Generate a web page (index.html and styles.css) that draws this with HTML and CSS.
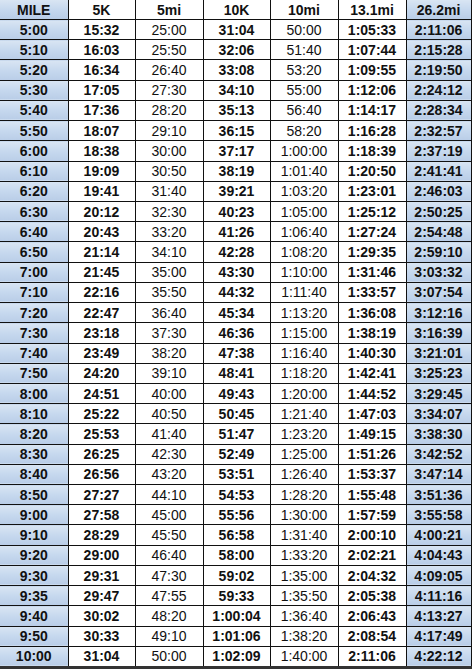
FILE: index.html
```html
<!DOCTYPE html>
<html>
<head>
<meta charset="utf-8">
<link rel="stylesheet" href="styles.css">
</head>
<body>
<table class="pace">
<colgroup>
<col class="c1"><col class="c2"><col class="c3"><col class="c4"><col class="c5"><col class="c6"><col class="c7">
</colgroup>
<thead>
<tr><th class="blue">MILE</th><th>5K</th><th>5mi</th><th>10K</th><th>10mi</th><th>13.1mi</th><th class="blue">26.2mi</th></tr>
</thead>
<tbody>
<tr><td class="blue">5:00</td><td>15:32</td><td class="reg">25:00</td><td>31:04</td><td class="reg">50:00</td><td>1:05:33</td><td class="blue">2:11:06</td></tr>
<tr><td class="blue">5:10</td><td>16:03</td><td class="reg">25:50</td><td>32:06</td><td class="reg">51:40</td><td>1:07:44</td><td class="blue">2:15:28</td></tr>
<tr><td class="blue">5:20</td><td>16:34</td><td class="reg">26:40</td><td>33:08</td><td class="reg">53:20</td><td>1:09:55</td><td class="blue">2:19:50</td></tr>
<tr><td class="blue">5:30</td><td>17:05</td><td class="reg">27:30</td><td>34:10</td><td class="reg">55:00</td><td>1:12:06</td><td class="blue">2:24:12</td></tr>
<tr><td class="blue">5:40</td><td>17:36</td><td class="reg">28:20</td><td>35:13</td><td class="reg">56:40</td><td>1:14:17</td><td class="blue">2:28:34</td></tr>
<tr><td class="blue">5:50</td><td>18:07</td><td class="reg">29:10</td><td>36:15</td><td class="reg">58:20</td><td>1:16:28</td><td class="blue">2:32:57</td></tr>
<tr><td class="blue">6:00</td><td>18:38</td><td class="reg">30:00</td><td>37:17</td><td class="reg">1:00:00</td><td>1:18:39</td><td class="blue">2:37:19</td></tr>
<tr><td class="blue">6:10</td><td>19:09</td><td class="reg">30:50</td><td>38:19</td><td class="reg">1:01:40</td><td>1:20:50</td><td class="blue">2:41:41</td></tr>
<tr><td class="blue">6:20</td><td>19:41</td><td class="reg">31:40</td><td>39:21</td><td class="reg">1:03:20</td><td>1:23:01</td><td class="blue">2:46:03</td></tr>
<tr><td class="blue">6:30</td><td>20:12</td><td class="reg">32:30</td><td>40:23</td><td class="reg">1:05:00</td><td>1:25:12</td><td class="blue">2:50:25</td></tr>
<tr><td class="blue">6:40</td><td>20:43</td><td class="reg">33:20</td><td>41:26</td><td class="reg">1:06:40</td><td>1:27:24</td><td class="blue">2:54:48</td></tr>
<tr><td class="blue">6:50</td><td>21:14</td><td class="reg">34:10</td><td>42:28</td><td class="reg">1:08:20</td><td>1:29:35</td><td class="blue">2:59:10</td></tr>
<tr><td class="blue">7:00</td><td>21:45</td><td class="reg">35:00</td><td>43:30</td><td class="reg">1:10:00</td><td>1:31:46</td><td class="blue">3:03:32</td></tr>
<tr><td class="blue">7:10</td><td>22:16</td><td class="reg">35:50</td><td>44:32</td><td class="reg">1:11:40</td><td>1:33:57</td><td class="blue">3:07:54</td></tr>
<tr><td class="blue">7:20</td><td>22:47</td><td class="reg">36:40</td><td>45:34</td><td class="reg">1:13:20</td><td>1:36:08</td><td class="blue">3:12:16</td></tr>
<tr><td class="blue">7:30</td><td>23:18</td><td class="reg">37:30</td><td>46:36</td><td class="reg">1:15:00</td><td>1:38:19</td><td class="blue">3:16:39</td></tr>
<tr><td class="blue">7:40</td><td>23:49</td><td class="reg">38:20</td><td>47:38</td><td class="reg">1:16:40</td><td>1:40:30</td><td class="blue">3:21:01</td></tr>
<tr><td class="blue">7:50</td><td>24:20</td><td class="reg">39:10</td><td>48:41</td><td class="reg">1:18:20</td><td>1:42:41</td><td class="blue">3:25:23</td></tr>
<tr><td class="blue">8:00</td><td>24:51</td><td class="reg">40:00</td><td>49:43</td><td class="reg">1:20:00</td><td>1:44:52</td><td class="blue">3:29:45</td></tr>
<tr><td class="blue">8:10</td><td>25:22</td><td class="reg">40:50</td><td>50:45</td><td class="reg">1:21:40</td><td>1:47:03</td><td class="blue">3:34:07</td></tr>
<tr><td class="blue">8:20</td><td>25:53</td><td class="reg">41:40</td><td>51:47</td><td class="reg">1:23:20</td><td>1:49:15</td><td class="blue">3:38:30</td></tr>
<tr><td class="blue">8:30</td><td>26:25</td><td class="reg">42:30</td><td>52:49</td><td class="reg">1:25:00</td><td>1:51:26</td><td class="blue">3:42:52</td></tr>
<tr><td class="blue">8:40</td><td>26:56</td><td class="reg">43:20</td><td>53:51</td><td class="reg">1:26:40</td><td>1:53:37</td><td class="blue">3:47:14</td></tr>
<tr><td class="blue">8:50</td><td>27:27</td><td class="reg">44:10</td><td>54:53</td><td class="reg">1:28:20</td><td>1:55:48</td><td class="blue">3:51:36</td></tr>
<tr><td class="blue">9:00</td><td>27:58</td><td class="reg">45:00</td><td>55:56</td><td class="reg">1:30:00</td><td>1:57:59</td><td class="blue">3:55:58</td></tr>
<tr><td class="blue">9:10</td><td>28:29</td><td class="reg">45:50</td><td>56:58</td><td class="reg">1:31:40</td><td>2:00:10</td><td class="blue">4:00:21</td></tr>
<tr><td class="blue">9:20</td><td>29:00</td><td class="reg">46:40</td><td>58:00</td><td class="reg">1:33:20</td><td>2:02:21</td><td class="blue">4:04:43</td></tr>
<tr><td class="blue">9:30</td><td>29:31</td><td class="reg">47:30</td><td>59:02</td><td class="reg">1:35:00</td><td>2:04:32</td><td class="blue">4:09:05</td></tr>
<tr><td class="blue">9:35</td><td>29:47</td><td class="reg">47:55</td><td>59:33</td><td class="reg">1:35:50</td><td>2:05:38</td><td class="blue">4:11:16</td></tr>
<tr><td class="blue">9:40</td><td>30:02</td><td class="reg">48:20</td><td>1:00:04</td><td class="reg">1:36:40</td><td>2:06:43</td><td class="blue">4:13:27</td></tr>
<tr><td class="blue">9:50</td><td>30:33</td><td class="reg">49:10</td><td>1:01:06</td><td class="reg">1:38:20</td><td>2:08:54</td><td class="blue">4:17:49</td></tr>
<tr class="last"><td class="blue">10:00</td><td>31:04</td><td class="reg">50:00</td><td>1:02:09</td><td class="reg">1:40:00</td><td>2:11:06</td><td class="blue">4:22:12</td></tr>
</tbody>
</table>
</body>
</html>
```
FILE: styles.css
```css
html, body {
  margin: 0;
  padding: 0;
  background: #ffffff;
}
.pace {
  border-collapse: collapse;
  table-layout: fixed;
  width: 471px;
  font-family: "Liberation Sans", Arial, sans-serif;
  font-size: 14px;
  color: #111;
}
.c1 { width: 68px; }
.c2 { width: 67px; }
.c3 { width: 68px; }
.c4 { width: 67px; }
.c5 { width: 68px; }
.c6 { width: 68px; }
.c7 { width: 65px; }
.pace th, .pace td {
  border: 1px solid #111;
  padding: 0;
  text-align: center;
  font-weight: bold;
  line-height: 16px;
  white-space: nowrap;
}
.pace thead th {
  border-top: none;
  height: 19px;
}
.pace tbody td {
  height: 19.22px;
}
.pace th:first-child, .pace td:first-child {
  border-left: none;
}
.pace .reg {
  font-weight: normal;
}
.pace .blue {
  background: linear-gradient(to bottom, #d9e5f3 0%, #c6d8ee 50%, #b9cde7 100%);
}
.pace tr.last td {
  border-bottom: 3px solid #333;
}
```
